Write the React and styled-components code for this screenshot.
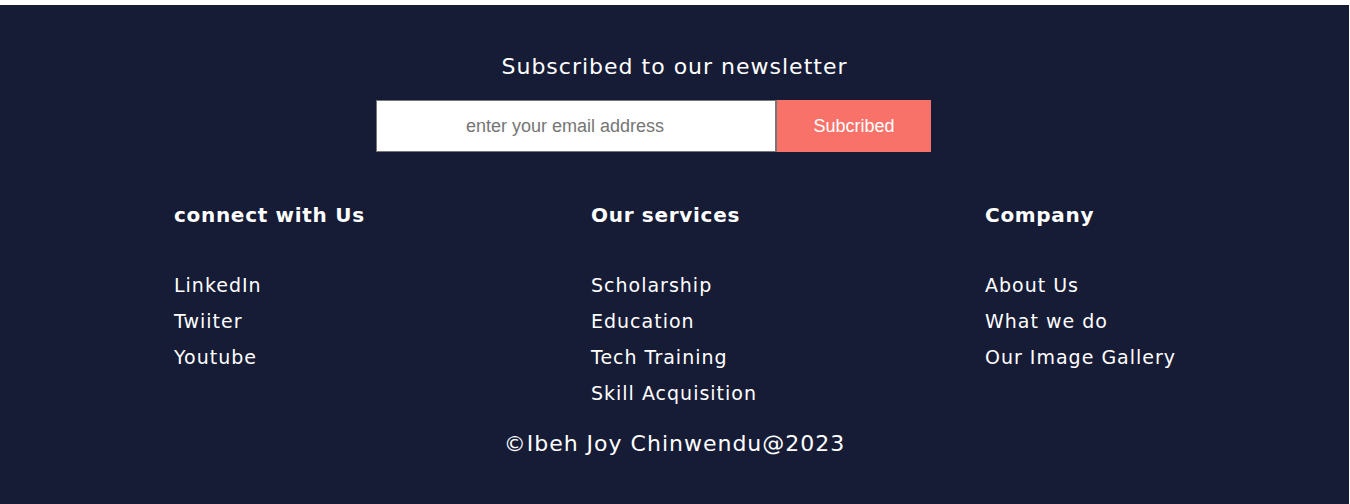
import React from 'react';
import styled, { createGlobalStyle } from 'styled-components';

const GlobalStyle = createGlobalStyle`
  html, body {
    margin: 0;
    padding: 0;
    background: #ffffff;
  }
  * {
    box-sizing: border-box;
  }
`;

const colors = {
  navy: '#171c36',
  white: '#ffffff',
  coral: '#f8726a',
  placeholder: '#757575',
};

const display = `"DejaVu Sans", "Liberation Sans", sans-serif`;

const Footer = styled.footer`
  margin-top: 5px;
  width: 1349px;
  height: 499px;
  background: ${colors.navy};
  color: ${colors.white};
  font-family: ${display};
  padding-top: 50px;
`;

const Newsletter = styled.section`
  display: flex;
  flex-direction: column;
  align-items: center;
`;

const NewsletterTitle = styled.h2`
  margin: 0;
  font-size: 22px;
  font-weight: 400;
  line-height: 24px;
  letter-spacing: 1px;
`;

const SubscribeForm = styled.form`
  display: flex;
  margin-top: 21px;
  margin-left: -42px;
`;

const EmailInput = styled.input`
  width: 401px;
  height: 52px;
  padding: 0 22px 0 0;
  border: 1px solid #767676;
  border-right-width: 2px;
  background: ${colors.white};
  text-align: center;
  font-family: "Liberation Sans", Arial, sans-serif;
  font-size: 18px;
  outline: none;

  &::placeholder {
    color: ${colors.placeholder};
  }
`;

const SubscribeButton = styled.button`
  width: 154px;
  height: 52px;
  border: none;
  background: ${colors.coral};
  color: ${colors.white};
  font-family: "Liberation Sans", Arial, sans-serif;
  font-size: 18px;
  cursor: pointer;
`;

const Columns = styled.div`
  display: grid;
  grid-template-columns: 417px 394px auto;
  padding-left: 174px;
  margin-top: 51px;
`;

const Column = styled.div`
  display: flex;
  flex-direction: column;
`;

const ColumnTitle = styled.h3`
  margin: 0 0 46px;
  font-size: 20px;
  font-weight: 700;
  line-height: 24px;
  letter-spacing: 0.7px;
`;

const LinkList = styled.ul`
  list-style: none;
  margin: 0;
  padding: 0;
  display: flex;
  flex-direction: column;
  gap: 12px;
`;

const FooterLink = styled.a`
  display: block;
  color: ${colors.white};
  text-decoration: none;
  font-size: 19px;
  line-height: 24px;
  letter-spacing: 1px;
`;

const Copyright = styled.p`
  margin: 27px 0 0;
  text-align: center;
  font-size: 22px;
  line-height: 24px;
  letter-spacing: 1px;
`;

const sections = [
  { title: 'connect with Us', links: ['LinkedIn', 'Twiiter', 'Youtube'] },
  {
    title: 'Our services',
    links: ['Scholarship', 'Education', 'Tech Training', 'Skill Acquisition'],
  },
  { title: 'Company', links: ['About Us', 'What we do', 'Our Image Gallery'] },
];

const App = () => (
  <>
    <GlobalStyle />
    <Footer>
      <Newsletter>
        <NewsletterTitle>Subscribed to our newsletter</NewsletterTitle>
        <SubscribeForm onSubmit={(e) => e.preventDefault()}>
          <EmailInput type="email" placeholder="enter your email address" />
          <SubscribeButton type="submit">Subcribed</SubscribeButton>
        </SubscribeForm>
      </Newsletter>

      <Columns>
        {sections.map((section) => (
          <Column key={section.title}>
            <ColumnTitle>{section.title}</ColumnTitle>
            <LinkList>
              {section.links.map((link) => (
                <li key={link}>
                  <FooterLink href="#">{link}</FooterLink>
                </li>
              ))}
            </LinkList>
          </Column>
        ))}
      </Columns>

      <Copyright>©Ibeh Joy Chinwendu@2023</Copyright>
    </Footer>
  </>
);

export default App;
